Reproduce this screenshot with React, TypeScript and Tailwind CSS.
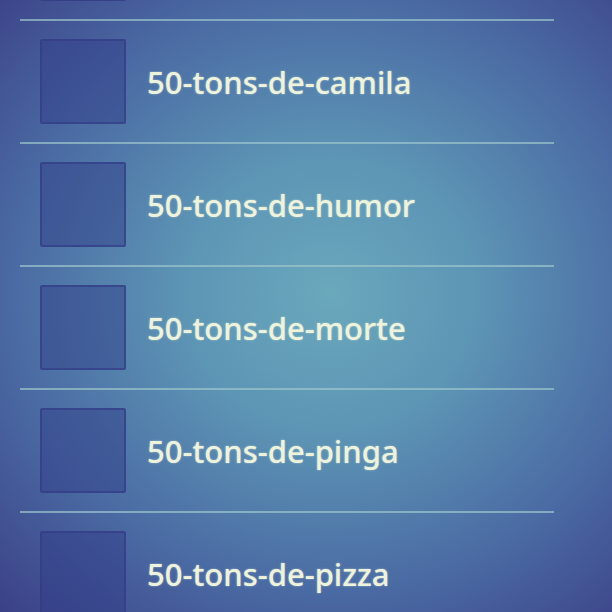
import React from 'react';

const items = ['', '50-tons-de-camila', '50-tons-de-humor', '50-tons-de-morte', '50-tons-de-pinga', '50-tons-de-pizza'];

function Row({ label }: { label: string }) {
  return (
    <div className="flex flex-col">
      <div className="flex h-[121px] items-center pl-[40px]">
        <div className="h-[85px] w-[86px] shrink-0 rounded-[2px] border-2 border-[#333d86]/70 bg-[#2f3a86]/45" />
        <span className="ml-[21px] pt-[2px] text-[31px] font-medium leading-none text-[#eef3de] [text-shadow:0_0_2px_rgba(240,250,220,0.6)]">
          {label}
        </span>
      </div>
      <div className="ml-[20px] mr-[58px] h-[2px] bg-[#9cc6cc]/70" />
    </div>
  );
}

export default function App() {
  return (
    <div
      className="relative h-[612px] w-[612px] overflow-hidden bg-[radial-gradient(ellipse_80%_75%_at_54%_48%,#6aa8bc_0%,#5d95b5_30%,#4a6aa3_65%,#3a3c84_100%)]"
      style={{ fontFamily: '"Noto Sans", "Open Sans", sans-serif' }}
    >
      <div className="-mt-[102px] flex flex-col">
        {items.map((label, i) => (
          <Row key={i} label={label} />
        ))}
      </div>
    </div>
  );
}
